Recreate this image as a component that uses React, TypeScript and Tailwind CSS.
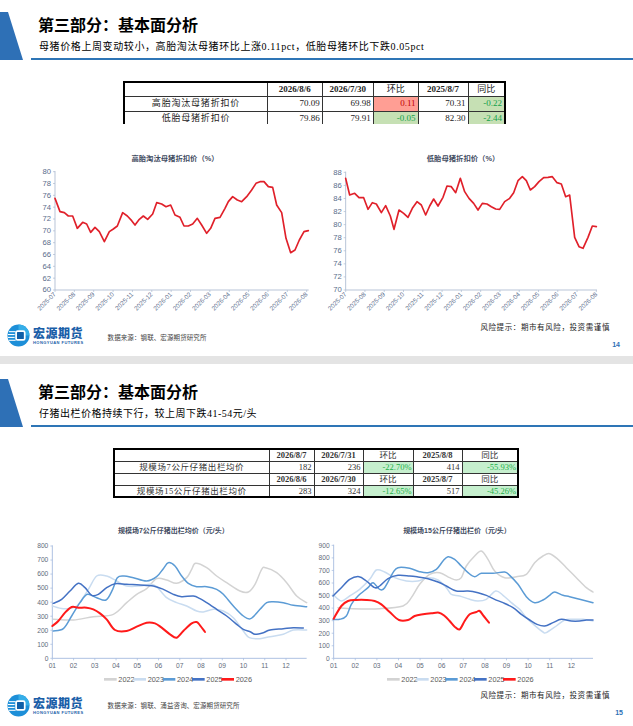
import React from 'react';

type Pt = [number, number];

interface Series {
  name?: string;
  color: string;
  width: number;
  pts: Pt[];
}

interface ChartProps {
  viewBox: string;
  width: number;
  height: number;
  title: string;
  titleX: number;
  titleY: number;
  titleSize: number;
  axisX: number;
  top: number;
  bottom: number;
  right: number;
  yLabels: string[];
  labelSize: number;
  labelColor: string;
  axisColor: string;
  xLabels: string[];
  xFirst: number;
  xLast: number;
  rotate?: boolean;
  smooth?: boolean;
  series: Series[];
  legend?: { x: number; y: number; step: number };
}

const linePath = (pts: Pt[]) => pts.map((p, i) => `${i ? 'L' : 'M'}${p[0]},${p[1]}`).join(' ');

// catmull-rom -> bezier, for the smooth seasonal lines
const smoothPath = (pts: Pt[]) => {
  let d = `M${pts[0][0]},${pts[0][1]}`;
  for (let i = 0; i < pts.length - 1; i++) {
    const p0 = pts[i - 1] || pts[i];
    const p1 = pts[i];
    const p2 = pts[i + 1];
    const p3 = pts[i + 2] || p2;
    const c1x = p1[0] + (p2[0] - p0[0]) / 6;
    const c1y = p1[1] + (p2[1] - p0[1]) / 6;
    const c2x = p2[0] - (p3[0] - p1[0]) / 6;
    const c2y = p2[1] - (p3[1] - p1[1]) / 6;
    d += ` C${c1x.toFixed(1)},${c1y.toFixed(1)} ${c2x.toFixed(1)},${c2y.toFixed(1)} ${p2[0]},${p2[1]}`;
  }
  return d;
};

const Chart: React.FC<ChartProps> = (c) => {
  const yStep = (c.bottom - c.top) / (c.yLabels.length - 1);
  const xStep = (c.xLast - c.xFirst) / (c.xLabels.length - 1);
  return (
    <svg
      width={c.width}
      height={c.height}
      viewBox={c.viewBox}
      className="block shrink-0 overflow-visible font-['Liberation_Sans','Noto_Sans_CJK_SC',sans-serif]"
    >
      <text x={c.titleX} y={c.titleY} textAnchor="middle" fontSize={c.titleSize} fontWeight={700} fill="#3f4b5f">
        {c.title}
      </text>
      {c.yLabels.map((l, i) => {
        const y = c.top + i * yStep;
        return (
          <g key={l}>
            <line x1={c.axisX - 6} x2={c.axisX} y1={y} y2={y} stroke={c.axisColor} strokeWidth={2} />
            <text x={c.axisX - 12} y={y + 7} textAnchor="end" fontSize={c.labelSize} fill={c.labelColor}>
              {l}
            </text>
          </g>
        );
      })}
      {c.xLabels.map((l, i) => {
        const x = c.xFirst + i * xStep;
        return (
          <g key={l + i}>
            <line x1={x} x2={x} y1={c.bottom} y2={c.bottom + 6} stroke={c.axisColor} strokeWidth={2} />
            {c.rotate ? (
              <text
                x={x + 4}
                y={c.bottom + 14}
                textAnchor="end"
                fontSize={c.labelSize - 4}
                fill={c.labelColor}
                transform={`rotate(-45 ${x + 4} ${c.bottom + 14})`}
              >
                {l}
              </text>
            ) : (
              <text x={x} y={c.bottom + 29} textAnchor="middle" fontSize={c.labelSize} fill={c.labelColor}>
                {l}
              </text>
            )}
          </g>
        );
      })}
      <line x1={c.axisX} x2={c.axisX} y1={c.top - 2} y2={c.bottom} stroke={c.axisColor} strokeWidth={2.5} />
      <line x1={c.axisX} x2={c.right} y1={c.bottom} y2={c.bottom} stroke={c.axisColor} strokeWidth={2.5} />
      {c.series.map((s, i) => (
        <path
          key={i}
          d={c.smooth ? smoothPath(s.pts) : linePath(s.pts)}
          fill="none"
          stroke={s.color}
          strokeWidth={s.width}
          strokeLinejoin="round"
          strokeLinecap="round"
        />
      ))}
      {c.legend &&
        c.series.map((s, i) => {
          const x = c.legend!.x + i * c.legend!.step;
          return (
            <g key={'lg' + i}>
              <line x1={x} x2={x + 38} y1={c.legend!.y} y2={c.legend!.y} stroke={s.color} strokeWidth={8} />
              <text x={x + 43} y={c.legend!.y + 8} fontSize={22} fill="#595959">
                {s.name}
              </text>
            </g>
          );
        })}
    </svg>
  );
};

const months = ['2025-07', '2025-08', '2025-09', '2025-10', '2025-11', '2025-12', '2026-01', '2026-02', '2026-03', '2026-04', '2026-05', '2026-06', '2026-07', '2026-08'];
const mm = ['01', '02', '03', '04', '05', '06', '07', '08', '09', '10', '11', '12'];

const highParity: Pt[] = [[165,205],[180,245],[193,248],[205,258],[218,258],[232,295],[248,277],[260,282],[272,307],[285,292],[298,305],[313,335],[328,305],[340,297],[352,288],[368,248],[382,258],[395,272],[405,285],[418,268],[430,258],[443,268],[458,252],[470,218],[485,222],[498,230],[512,225],[525,255],[540,262],[552,288],[565,288],[578,282],[592,265],[605,285],[620,310],[632,295],[645,265],[660,262],[675,235],[685,215],[698,200],[712,210],[725,215],[740,200],[755,180],[768,160],[780,155],[792,155],[805,170],[818,172],[830,225],[845,248],[858,325],[872,368],[885,360],[898,330],[912,305],[925,302]];

const lowParity: Pt[] = [[98,145],[110,195],[125,190],[138,203],[152,203],[165,238],[178,218],[190,222],[205,248],[218,227],[232,258],[243,298],[258,240],[272,250],[285,262],[298,235],[312,215],[325,225],[338,255],[350,228],[362,207],[375,228],[390,202],[402,168],[415,170],[428,188],[442,145],[455,185],[468,205],[482,220],[495,240],[508,220],[522,222],[535,230],[548,237],[560,238],[575,215],[590,205],[602,188],[615,152],[628,140],[640,152],[652,180],[665,170],[678,155],[692,143],[705,142],[718,140],[732,158],[745,162],[758,200],[770,195],[785,322],[798,350],[810,355],[825,322],[838,288],[850,290]];

const piglet7: Series[] = [
  { name: '2022', color: '#d3d3d3', width: 4.5, pts: [[160,340],[220,342],[280,332],[340,325],[380,290],[410,265],[440,248],[470,218],[500,222],[530,232],[560,215],[575,190],[587,172],[620,185],[650,210],[680,230],[720,255],[745,258],[765,235],[785,190],[797,185],[830,200],[860,230],[890,270],[920,290]] },
  { name: '2023', color: '#c9dcf0', width: 4.5, pts: [[157,300],[190,308],[230,300],[265,250],[290,210],[320,210],[350,225],[380,240],[420,240],[450,235],[470,242],[500,275],[530,290],[560,300],[590,315],[610,318],[640,310],[670,315],[700,335],[730,375],[748,395],[780,398],[810,392],[850,385],[880,372],[920,372]] },
  { name: '2024', color: '#5b9bd5', width: 4.5, pts: [[160,375],[190,368],[215,330],[240,290],[262,265],[290,275],[318,282],[338,250],[352,215],[372,210],[400,215],[440,225],[470,212],[490,188],[505,170],[525,180],[545,210],[565,232],[590,242],[620,242],[650,250],[670,265],[700,300],[730,330],[752,338],[780,310],[800,290],[820,287],[850,290],[880,298],[920,302]] },
  { name: '2025', color: '#4472c4', width: 4.5, pts: [[160,292],[185,280],[210,255],[235,232],[255,245],[275,268],[295,265],[320,245],[345,233],[380,235],[420,237],[460,240],[490,250],[520,265],[545,272],[580,270],[600,278],[620,290],[650,310],[680,330],[710,355],[730,370],[752,378],[765,385],[790,380],[810,372],[850,368],[880,365],[910,366]] },
  { name: '2026', color: '#ff1a1a', width: 6, pts: [[157,360],[175,345],[195,320],[215,303],[235,305],[260,305],[280,310],[300,322],[320,340],[345,372],[380,375],[410,362],[440,350],[465,352],[485,365],[510,385],[530,395],[550,375],[575,352],[590,348],[600,358],[615,378]] },
];

const piglet15: Series[] = [
  { name: '2022', color: '#d3d3d3', width: 4.5, pts: [[75,305],[120,308],[200,308],[270,300],[295,275],[320,235],[350,205],[380,200],[410,215],[430,222],[445,215],[460,180],[485,150],[505,135],[525,160],[545,195],[575,215],[610,212],[640,205],[665,170],[690,150],[710,143],[735,160],[760,185],[790,215],[820,245],[840,258]] },
  { name: '2023', color: '#c9dcf0', width: 4.5, pts: [[60,265],[85,285],[110,270],[140,250],[170,220],[190,192],[215,198],[245,215],[280,225],[315,225],[345,215],[375,222],[400,245],[415,265],[440,270],[470,280],[495,285],[520,280],[548,255],[570,268],[595,290],[620,310],[640,335],[665,358],[690,378],[700,380],[730,360],[755,342],[780,340],[810,340],[840,345]] },
  { name: '2024', color: '#5b9bd5', width: 4.5, pts: [[60,340],[80,340],[100,330],[115,295],[135,270],[165,245],[180,230],[200,250],[215,245],[240,200],[255,185],[290,187],[320,197],[345,200],[370,190],[390,165],[405,152],[425,160],[445,180],[465,200],[485,212],[505,202],[540,202],[575,198],[590,208],[615,235],[640,272],[665,290],[690,282],[710,268],[725,258],[750,268],[770,272],[800,280],[840,290]] },
  { name: '2025', color: '#4472c4', width: 4.5, pts: [[60,270],[85,245],[110,220],[138,212],[160,225],[185,245],[200,240],[225,218],[255,208],[290,210],[315,213],[345,218],[375,228],[400,240],[430,255],[465,255],[495,260],[520,268],[545,280],[570,290],[600,305],[625,325],[650,342],[672,355],[695,360],[720,350],[745,340],[775,345],[800,345],[820,342],[840,342]] },
  { name: '2026', color: '#ff1a1a', width: 6, pts: [[62,338],[85,300],[105,285],[130,282],[160,282],[185,285],[205,295],[230,318],[258,342],[285,342],[305,330],[330,325],[355,322],[378,320],[395,330],[410,345],[425,362],[440,370],[455,345],[470,325],[490,318],[500,315],[512,330],[528,350]] },
];

const serif = "font-['Liberation_Serif','Noto_Sans_CJK_SC',serif]";

const Header: React.FC<{ sub: string; pt: string; tracking: string }> = ({ sub, pt, tracking }) => (
  <div className={`flex ${pt}`}>
    <svg width="24" height="48" viewBox="0 0 24 48" className="block shrink-0">
      <polygon points="0,0 8,0 23,48 0,48" fill="#2e70b6" />
    </svg>
    <div className="ml-[7px] flex h-[48px] flex-1 flex-col border-b-2 border-[#2e75b6] pl-[7px] pt-[2px]">
      <div className="font-['Noto_Sans_CJK_SC',sans-serif] text-[16px] font-bold leading-[20px] text-black">
        第三部分：基本面分析
      </div>
      <div className={`mt-[7px] pl-[1px] text-[10px] leading-[12px] text-black ${serif} ${tracking}`}>{sub}</div>
    </div>
  </div>
);

const Logo = () => (
  <div className="flex items-center gap-[3px]">
    <svg width="23" height="23" viewBox="0 0 24 24" className="block">
      <circle cx="12" cy="12" r="11.5" fill="#1d8fd8" />
      <path d="M12 0.5 A11.5 11.5 0 0 1 23.5 12 L12 12 Z" fill="#36aee8" />
      <line x1="2" y1="8" x2="9" y2="8" stroke="#fff" strokeWidth="1.1" />
      <line x1="1" y1="11" x2="8" y2="11" stroke="#fff" strokeWidth="1.1" />
      <line x1="1" y1="14" x2="8" y2="14" stroke="#fff" strokeWidth="1.1" />
      <line x1="2" y1="17" x2="9" y2="17" stroke="#fff" strokeWidth="1.1" />
      <rect x="9.5" y="7.5" width="9" height="9" rx="1.5" fill="#0f5fa8" stroke="#fff" strokeWidth="1.8" />
    </svg>
    <div className="flex flex-col gap-[2px]">
      <div className="font-['Noto_Sans_CJK_SC',sans-serif] text-[12px] font-black leading-[12px] tracking-[0.5px] text-[#1a5ea8]">
        宏源期货
      </div>
      <div className="font-['Liberation_Sans',sans-serif] text-[4px] font-bold leading-[4px] tracking-[0.45px] text-[#1a5ea8]">
        HONGYUAN FUTURES
      </div>
    </div>
  </div>
);

const Risk = () => (
  <div className={`text-[7.5px] leading-[10px] tracking-[0.6px] text-[#222] ${serif}`}>风险提示：期市有风险，投资需谨慎</div>
);

const td = 'border border-[#333] p-0 leading-none';
const pos = 'bg-[#ff9e94] text-[#c00000]';
const neg = 'bg-[#c6e0b4] text-[#12a04a]';
const neg2 = 'bg-[#c6efce] text-[#22b04a]';

const Slide14 = () => (
  <div className="h-[356px] bg-white">
    <Header pt="pt-[12px]" tracking="tracking-[0.6px]" sub="母猪价格上周变动较小，高胎淘汰母猪环比上涨0.11pct，低胎母猪环比下跌0.05pct" />
    <div className="ml-[123px] mt-[21px] h-[43px] w-[383px] overflow-hidden">
      <table className={`table-fixed border-collapse border-2 border-black text-[9px] text-[#222] ${serif}`}>
        <colgroup>
          <col className="w-[144px]" />
          <col className="w-[55px]" />
          <col className="w-[51px]" />
          <col className="w-[45px]" />
          <col className="w-[50px]" />
          <col className="w-[37px]" />
        </colgroup>
        <tbody>
          <tr className="h-[14px]">
            <td className={td}></td>
            <td className={`${td} text-center font-bold`}>2026/8/6</td>
            <td className={`${td} text-center font-bold`}>2026/7/30</td>
            <td className={`${td} text-center`}>环比</td>
            <td className={`${td} text-center font-bold`}>2025/8/7</td>
            <td className={`${td} text-center`}>同比</td>
          </tr>
          <tr className="h-[15px]">
            <td className={`${td} text-center tracking-[0.8px]`}>高胎淘汰母猪折扣价</td>
            <td className={`${td} pr-[2px] text-right`}>70.09</td>
            <td className={`${td} pr-[2px] text-right`}>69.98</td>
            <td className={`${td} pr-[2px] text-right ${pos}`}>0.11</td>
            <td className={`${td} pr-[2px] text-right`}>70.31</td>
            <td className={`${td} pr-[2px] text-right ${neg}`}>-0.22</td>
          </tr>
          <tr className="h-[15px]">
            <td className={`${td} text-center tracking-[0.8px]`}>低胎母猪折扣价</td>
            <td className={`${td} pr-[2px] text-right`}>79.86</td>
            <td className={`${td} pr-[2px] text-right`}>79.91</td>
            <td className={`${td} pr-[2px] text-right ${neg}`}>-0.05</td>
            <td className={`${td} pr-[2px] text-right`}>82.30</td>
            <td className={`${td} pr-[2px] text-right ${neg}`}>-2.44</td>
          </tr>
        </tbody>
      </table>
    </div>
    <div className="mt-[21px] flex">
      <Chart
        viewBox="0 45 948 495" width={316} height={165}
        title="高胎淘汰母猪折扣价（%）" titleX={525} titleY={93} titleSize={22}
        axisX={165} top={125} bottom={480} right={926}
        yLabels={['80', '78', '76', '74', '72', '70', '68', '66', '64', '62', '60']}
        labelSize={23} labelColor="#5a6d8c" axisColor="#a9b8cf"
        xLabels={months} xFirst={165} xLast={920} rotate
        series={[{ color: '#e0202a', width: 5, pts: highParity }]}
      />
      <Chart
        viewBox="9 45 951 495" width={317} height={165}
        title="低胎母猪折扣价（%）" titleX={450} titleY={93} titleSize={22}
        axisX={98} top={127} bottom={480} right={852}
        yLabels={['88', '86', '84', '82', '80', '78', '76', '74', '72', '70']}
        labelSize={23} labelColor="#5a6d8c" axisColor="#a9b8cf"
        xLabels={months} xFirst={98} xLast={850} rotate
        series={[{ color: '#e0202a', width: 5, pts: lowParity }]}
      />
    </div>
    <div className="flex h-[46px]">
      <div className="pl-[7px] pt-[14px]">
        <Logo />
      </div>
      <div className={`ml-[24px] pt-[24px] text-[6.5px] leading-[8px] tracking-[0.1px] text-[#444] ${serif}`}>
        数据来源：钢联、宏源期货研究所
      </div>
      <div className="ml-auto flex flex-col items-end pr-[13px] pt-[13px]">
        <div className="mr-[10px]">
          <Risk />
        </div>
        <div className="mt-[8px] font-['Liberation_Sans',sans-serif] text-[7px] font-bold leading-[8px] text-[#2e70b6]">14</div>
      </div>
    </div>
  </div>
);

const Slide15 = () => (
  <div className="h-[362px] bg-white">
    <Header pt="pt-[15px]" tracking="tracking-[0.5px]" sub="仔猪出栏价格持续下行，较上周下跌41-54元/头" />
    <table className={`ml-[113px] mt-[21px] table-fixed border-collapse border-2 border-black text-[8.5px] text-[#333] ${serif}`}>
      <colgroup>
        <col className="w-[155px]" />
        <col className="w-[45px]" />
        <col className="w-[49px]" />
        <col className="w-[50px]" />
        <col className="w-[49px]" />
        <col className="w-[56px]" />
      </colgroup>
      <tbody>
        <tr className="h-[12px]">
          <td className={td}></td>
          <td className={`${td} text-center font-bold`}>2026/8/7</td>
          <td className={`${td} text-center font-bold`}>2026/7/31</td>
          <td className={`${td} text-center`}>环比</td>
          <td className={`${td} text-center font-bold`}>2025/8/8</td>
          <td className={`${td} text-center`}>同比</td>
        </tr>
        <tr className="h-[12px]">
          <td className={`${td} text-center tracking-[0.6px]`}>规模场7公斤仔猪出栏均价</td>
          <td className={`${td} pr-[2px] text-right`}>182</td>
          <td className={`${td} pr-[2px] text-right`}>236</td>
          <td className={`${td} pr-[1px] text-right ${neg2}`}>-22.70%</td>
          <td className={`${td} pr-[2px] text-right`}>414</td>
          <td className={`${td} pr-[1px] text-right ${neg2}`}>-55.93%</td>
        </tr>
        <tr className="h-[12px]">
          <td className={td}></td>
          <td className={`${td} text-center font-bold`}>2026/8/6</td>
          <td className={`${td} text-center font-bold`}>2026/7/30</td>
          <td className={`${td} text-center`}>环比</td>
          <td className={`${td} text-center font-bold`}>2025/8/7</td>
          <td className={`${td} text-center`}>同比</td>
        </tr>
        <tr className="h-[12px]">
          <td className={`${td} text-center tracking-[0.6px]`}>规模场15公斤仔猪出栏均价</td>
          <td className={`${td} pr-[2px] text-right`}>283</td>
          <td className={`${td} pr-[2px] text-right`}>324</td>
          <td className={`${td} pr-[1px] text-right ${neg2}`}>-12.65%</td>
          <td className={`${td} pr-[2px] text-right`}>517</td>
          <td className={`${td} pr-[1px] text-right ${neg2}`}>-45.26%</td>
        </tr>
      </tbody>
    </table>
    <div className="mt-[18px] flex">
      <Chart
        viewBox="0 30 948 525" width={316} height={175}
        title="规模场7公斤仔猪出栏均价（元/头）" titleX={520} titleY={82} titleSize={21}
        axisX={157} top={120} bottom={457} right={920}
        yLabels={['800', '700', '600', '500', '400', '300', '200', '100', '0']}
        labelSize={20} labelColor="#5f6b7a" axisColor="#9fb6dc"
        xLabels={mm} xFirst={157} xLast={858}
        smooth series={piglet7} legend={{ x: 312, y: 520, step: 88 }}
      />
      <Chart
        viewBox="9 30 951 525" width={317} height={175}
        title="规模场15公斤仔猪出栏价（元/头）" titleX={432} titleY={82} titleSize={21}
        axisX={62} top={118} bottom={457} right={840}
        yLabels={['900', '800', '700', '600', '500', '400', '300', '200', '100', '0']}
        labelSize={20} labelColor="#5f6b7a" axisColor="#9fb6dc"
        xLabels={mm} xFirst={62} xLast={775}
        smooth series={piglet15} legend={{ x: 222, y: 520, step: 87 }}
      />
    </div>
    <div className="flex h-[36px]">
      <div className="pl-[7px] pt-[3px]">
        <Logo />
      </div>
      <div className={`ml-[24px] pt-[11px] text-[6.5px] leading-[8px] tracking-[0.1px] text-[#444] ${serif}`}>
        数据来源：钢联、涌益咨询、宏源期货研究所
      </div>
      <div className="ml-auto flex flex-col items-end pr-[10px] pt-[0px]">
        <div className="mr-[13px]">
          <Risk />
        </div>
        <div className="mt-[8px] font-['Liberation_Sans',sans-serif] text-[7px] font-bold leading-[8px] text-[#2e70b6]">15</div>
      </div>
    </div>
  </div>
);

export default function App() {
  return (
    <div className="flex w-[633px] flex-col gap-[8px] bg-[#e4e4e4]">
      <Slide14 />
      <Slide15 />
    </div>
  );
}
